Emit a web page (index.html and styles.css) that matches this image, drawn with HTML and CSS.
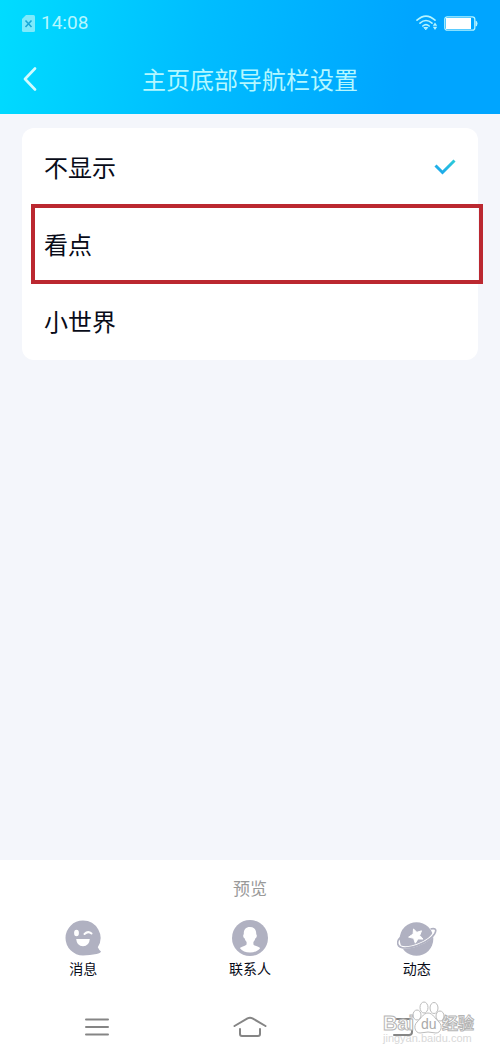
FILE: index.html
```html
<!DOCTYPE html>
<html lang="zh-CN">
<head>
<meta charset="utf-8">
<meta name="viewport" content="width=device-width, initial-scale=1">
<title>主页底部导航栏设置</title>
<link rel="stylesheet" href="styles.css">
</head>
<body>
<div class="screen">
  <header class="header">
    <div class="status">
      <svg class="sim" width="13" height="17" viewBox="0 0 13 17" aria-hidden="true"><path d="M4 0h7.500Q13 0 13 1.500V15.500Q13 17 11.500 17h-10Q0 17 0 15.500V4z" fill="#7eeafb"/><path d="M3.500 5.500l6 6.500M9.500 5.500l-6 6.500" stroke="#17a9d8" stroke-width="1.600"/></svg>
      <span class="time">14:08</span>
      <svg class="wifi" width="22" height="16" viewBox="0 0 22 16" fill="none" stroke="#b5f4ff" stroke-width="1.600" stroke-linecap="round" aria-hidden="true"><path d="M1 5.200Q10 -3 19 5.200M4 8.200Q10 2.800 16 8.200M6.800 11Q10 8.300 13.200 11"/><path d="M8.300 12.500h3.400L10 14.500z" fill="#b5f4ff" stroke-width="1"/><path d="M16.800 10.800l2.200-3.300 2.200 3.300zM16.800 11.700l2.200 3.300 2.200-3.300z" fill="#b5f4ff" stroke="none"/></svg>
      <svg width="34" height="15" viewBox="0 0 34 15" aria-hidden="true"><rect x=".8" y=".8" width="30" height="13.400" rx="2.500" fill="none" stroke="#b5f4ff" stroke-width="1.300"/><rect x="2" y="2" width="25" height="11" fill="#fff"/><path d="M31.500 4.500q2 .5 2 3t-2 3z" fill="#b5f4ff"/></svg>
    </div>
    <div class="titlebar">
      <button class="back" type="button" aria-label="返回"><svg width="14" height="24" viewBox="0 0 14 24" fill="none" stroke="#d0fbff" stroke-width="2.600" stroke-linecap="round" stroke-linejoin="round"><path d="M12 1.500L2 12l10 10.500"/></svg></button>
      <h1 class="title">主页底部导航栏设置</h1>
    </div>
  </header>
  <main class="content">
    <div class="options">
      <button class="option" type="button" aria-pressed="true"><span>不显示</span>
        <svg width="22" height="16" viewBox="0 0 22 16" fill="none" aria-hidden="true"><defs><linearGradient id="tick" x1="0" y1="1" x2="1" y2="0"><stop offset="0" stop-color="#1ba5ee"/><stop offset="1" stop-color="#2ccbd8"/></linearGradient></defs><path d="M1.500 6.500L8.500 13.500 20.500 1.500" stroke="url(#tick)" stroke-width="3"/></svg>
      </button>
      <button class="option marked" type="button"><span>看点</span></button>
      <button class="option" type="button"><span>小世界</span></button>
    </div>
  </main>
  <footer class="footer">
    <h2 class="preview">预览</h2>
    <div class="tabs">
      <button class="tab" type="button">
        <svg width="40" height="36" viewBox="0 0 40 36" aria-hidden="true"><path d="M20 .5A17.500 17.500 0 0 1 34.800 27.300Q36 30 38 31.500Q37.500 33.200 33.500 34Q27 35.400 20 35.500A17.500 17.500 0 0 1 20 .5z" fill="#b0b1c1"/><ellipse cx="13.500" cy="13" rx="2.400" ry="3.300" fill="#fff"/><path d="M21.500 14q3.500-3.500 7-.5" stroke="#fff" stroke-width="2" stroke-linecap="round" fill="none"/><path d="M13.200 19h13.600q-.6 7.200-6.800 7.200T13.200 19z" fill="#fff"/></svg>
        <span>消息</span>
      </button>
      <button class="tab" type="button">
        <svg width="40" height="36" viewBox="0 0 40 36" aria-hidden="true"><circle cx="20" cy="18" r="18" fill="#b0b1c1"/><path d="M20 7c4.500 0 6.500 3 6.200 7.300 1 .3.800 3.500-.8 4-.5 1.800-1.200 2.800-2 3.700v2.500c1.500 1.700 4.500 1.700 6.800 3.500-2.200 3-6 4.500-10.200 4.500s-8-1.500-10.200-4.500c2.300-1.800 5.300-1.800 6.800-3.500V22c-.8-.9-1.500-1.900-2-3.700-1.600-.5-1.800-3.700-.8-4C13.500 10 15.500 7 20 7z" fill="#fff"/></svg>
        <span>联系人</span>
      </button>
      <button class="tab" type="button">
        <svg width="40" height="36" viewBox="0 0 40 36" aria-hidden="true"><circle cx="19.500" cy="19" r="16.800" fill="#b0b1c1"/><path d="M3 26.300C12 30.500 33 21.500 37 13" fill="none" stroke="#fff" stroke-width="2.500"/><path d="M3.500 17.500C-1 21.500-.5 28 8 28 18 28 33 21 37.500 14 40.500 9 37.500 7.800 33.500 9" fill="none" stroke="#b0b1c1" stroke-width="1.700"/><path d="M16.500 9l3.400 3.300 4.600-1.500-1.800 4.600 3.300 3.700-5-.2-2.700 4.300-1.700-4.900-5-1.200 4.500-3z" fill="#fff" stroke="#fff" stroke-linejoin="round"/></svg>
        <span>动态</span>
      </button>
    </div>
    <nav class="system">
      <button class="key" type="button" aria-label="菜单"><svg width="34" height="22" viewBox="0 0 34 22" fill="none" stroke="#858585" stroke-width="2" stroke-linecap="round"><path d="M6 3.500h22M6 11h22M6 18.500h22"/></svg></button>
      <button class="key" type="button" aria-label="主屏幕"><svg width="34" height="22" viewBox="0 0 34 22" fill="none" stroke="#858585" stroke-width="2" stroke-linecap="round" stroke-linejoin="round"><path d="M1.500 10L14.500 2.400q2.500-1.300 5 0L32.500 10M7 13v5q0 2 2 2h16q2 0 2-2v-5"/></svg></button>
      <button class="key" type="button" aria-label="返回上一级"><svg width="34" height="22" viewBox="0 0 34 22" fill="none" stroke="#858585" stroke-width="2" stroke-linecap="round"><path d="M8 3h15q3 0 3 3v10q0 3-3 3H8"/></svg></button>
    </nav>
    <div class="watermark">
      <svg width="96" height="48" viewBox="0 0 96 48" role="img" aria-label="Baidu 经验">
        <g fill="#fff" stroke="#bcbcbc" stroke-width="1"><ellipse cx="37" cy="14" rx="4" ry="5"/><ellipse cx="44" cy="6.500" rx="4" ry="5.500"/><ellipse cx="54" cy="7" rx="4" ry="5.500"/><ellipse cx="60" cy="15" rx="4" ry="5"/><path d="M48 12c5 0 7 6 11 9 4 4 2 11-3 11-3 0-5-1-8-1s-5 1-8 1c-5 0-7-7-3-11 4-3 6-9 11-9z"/></g>
        <text class="wm-bai" x="3" y="29">Bai</text><text class="wm-du" x="41" y="28">du</text><text class="wm-exp" x="62" y="28">经验</text><text class="wm-url" x="3" y="41">jingyan.baidu.com</text>
      </svg>
    </div>
  </footer>
</div>
</body>
</html>
```
FILE: styles.css
```css
* { box-sizing: border-box; }
body { margin: 0; background: #f4f6fb; color: #080b18; font-family: "Noto Sans CJK SC", sans-serif; }
button { margin: 0; padding: 0; border: 0; background: none; color: inherit; font: inherit; }
svg { display: block; flex: none; }
.screen { display: flex; flex-direction: column; min-height: 100vh; }
.header { height: 114px; background: linear-gradient(100deg, #00dcff 0%, #00bdff 40%, #00a5ff 80%); color: #b4f7ff; }
.status { display: flex; align-items: center; height: 46px; padding: 0 22px; }
.time { margin-left: 6px; font: 19px/24px Roboto, sans-serif; }
.wifi { margin: 0 6px 0 auto; }
.titlebar { display: grid; grid-template-columns: 40px 1fr 40px; align-items: center; height: 66px; padding: 0 10px; }
.back { display: grid; place-items: center; height: 48px; }
.title { margin: 0; text-align: center; font-size: 24px; line-height: 36px; font-weight: 400; }
.content { flex: 1; padding: 14px 22px; }
.options { padding-bottom: 1px; border-radius: 12px; background: #fff; }
.option { position: relative; display: flex; align-items: center; justify-content: space-between; width: 100%; height: 77px; padding: 0 22px; font-size: 24px; line-height: 36px; text-align: left; }
.marked::after { content: ""; position: absolute; inset: -1px -5px -2px 9px; border: 4px solid #bb2830; }
.footer { position: relative; background: #fff; padding-top: 16px; }
.preview { margin: 0; color: #999; font-size: 17px; line-height: 24px; font-weight: 400; text-align: center; }
.tabs { display: grid; grid-template-columns: repeat(3, 1fr); margin-top: 20px; }
.tab { display: flex; flex-direction: column; align-items: center; gap: 2px; font-size: 14px; line-height: 20px; }
.system { display: flex; justify-content: space-between; padding: 38px 80px 18px; }
.watermark { position: absolute; right: 24px; bottom: 7px; }
.watermark text { font-family: "Liberation Sans", "Noto Sans CJK SC", sans-serif; fill: #fff; stroke: #b5b5b5; stroke-width: 1px; }
.watermark .wm-bai { font-size: 20px; font-weight: 700; }
.watermark .wm-du { font-size: 14px; fill: #aaa; stroke: none; }
.watermark .wm-exp { font-size: 16px; font-weight: 700; }
.watermark .wm-url { font-size: 11px; fill: #d8d8d8; stroke: none; }
```
